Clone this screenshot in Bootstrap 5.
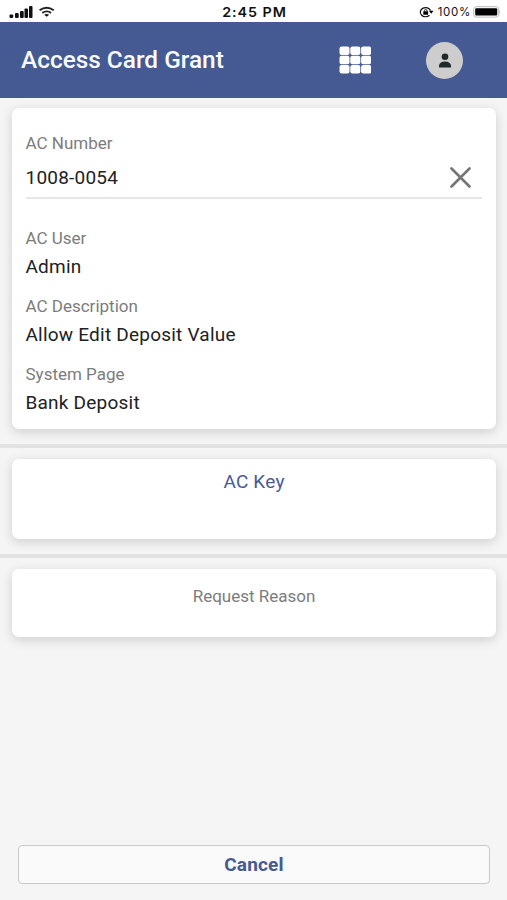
<!DOCTYPE html>
<html lang="en">
<head>
<meta charset="utf-8">
<meta name="viewport" content="width=device-width, initial-scale=1">
<title>Access Card Grant</title>
<link href="https://cdn.jsdelivr.net/npm/bootstrap@5.3.0/dist/css/bootstrap.min.css" rel="stylesheet">
<style>
body{font-family:Roboto,sans-serif;background:#f5f5f5;color:#212121;height:900px;overflow:hidden}
.status{height:22px;background:#fff;font-family:Inter,sans-serif;color:#111;padding:2px 6px 0 9px;display:grid;grid-template-columns:1fr auto 1fr}
.clock{font-size:13.5px;font-weight:600;line-height:20px;letter-spacing:.9px;transform:scaleX(1.06)}
.batt{font-size:11.5px;line-height:20px;letter-spacing:.7px;margin:0 2px 0 4px}
.topbar{height:76px;background:#455a92;padding:0 44px 0 21px}
.title{font-size:24.4px;font-weight:500;color:#f8faff;line-height:30px}
.apps{margin-right:55px}
.avatar{width:37px;height:37px;background:#cdcdcd}
.panel{border:0;border-radius:7px;margin:0 11px 0 12px;box-shadow:0 3px 12px rgba(0,0,0,.16)}
.details{height:321px;margin-top:10px;padding:23px 14px 0 13.5px}
.lbl{font-size:17px;line-height:24px;color:#7c7c7c}
.val{font-size:19px;letter-spacing:.22px;line-height:26px}
.lbl+.val{margin-top:4px}
.val+.lbl{margin-top:14px}
.entry{height:44px;border-bottom:2px solid #e6e6e6;padding:3px 11px 0 0;margin-bottom:27px}
.band{height:4px;background:#e2e2e2;margin:15px 0 11px}
.keycard{height:80px;padding-top:10px}
.keytext{font-size:19px;letter-spacing:.2px;line-height:26px;color:#4a5a98}
.reasoncard{height:68px;padding-top:15px}
.cancel{height:39px;margin:auto 17px 16px 18px;background:#fafafa;border:1.5px solid #c9c9c9;border-radius:4px;color:#455a92;font-size:19px;letter-spacing:.2px;font-weight:700;padding:0;line-height:35px}
</style>
</head>
<body class="d-flex flex-column">
<div class="status flex-shrink-0 align-items-center">
  <div class="d-flex align-items-center">
    <svg width="50" height="14" viewBox="0 0 50 14" fill="#111"><rect x=".5" y="9.500" width="3.700" height="3.500" rx="1"/><rect x="6" y="8" width="3.700" height="5" rx="1"/><rect x="11" y="6" width="3.700" height="7" rx="1"/><rect x="15.500" y="3.500" width="3.500" height="9.500" rx="1"/><rect x="20" y="1" width="3.500" height="12" rx="1"/><g fill="none" stroke="#222" stroke-width="1.900"><path d="M30.600 5.300Q37.700.1 44.800 5.300"/><path d="M33.300 7.900Q37.700 4.900 42.100 7.900"/></g><path d="M35.200 9.700Q37.700 8.300 40.200 9.700L37.700 11.700Z"/></svg>
  </div>
  <div class="clock">2:45 PM</div>
  <div class="d-flex align-items-center justify-content-end">
    <svg class="flex-shrink-0" width="15" height="12" viewBox="0 0 15 12"><path d="M11.600 4.600A5.300 4.600 0 1 0 10.500 9.300" fill="none" stroke="#111" stroke-width="1.200"/><path d="M9.900 4.800H14.500L12.200 7.700Z"/><rect x="4.300" y="5.300" width="4.800" height="3.500" rx=".5"/><path d="M5.300 5.500V4.300Q6.700 2.500 8.100 4.300V5.500" fill="none" stroke="#111"/></svg>
    <span class="batt">100%</span>
    <svg class="flex-shrink-0" width="28" height="12" viewBox="0 0 28 12"><rect x=".7" y=".7" width="25" height="10.400" rx="2.500" fill="#fff" stroke="#bbb"/><rect x="2.200" y="2.200" width="22" height="7.400" rx="1"/><path d="M26.500 4v4q1.500-2 0-4" fill="#999"/></svg>
  </div>
</div>
<nav class="topbar d-flex align-items-center flex-shrink-0">
  <div class="title me-auto">Access Card Grant</div>
  <svg class="apps" width="32" height="28" viewBox="-.5 -.5 32 28" fill="#fff"><rect width="10" height="8.500" rx="2"/><rect x="10.800" width="10" height="8.500" rx="2"/><rect x="21.600" width="10" height="8.500" rx="2"/><rect y="9.300" width="10" height="8.500" rx="2"/><rect x="10.800" y="9.300" width="10" height="8.500" rx="2"/><rect x="21.600" y="9.300" width="10" height="8.500" rx="2"/><rect y="18.600" width="10" height="8.500" rx="2"/><rect x="10.800" y="18.600" width="10" height="8.500" rx="2"/><rect x="21.600" y="18.600" width="10" height="8.500" rx="2"/></svg>
  <div class="avatar rounded-circle d-flex align-items-center justify-content-center"><svg width="12" height="15" viewBox="0 0 12 15" fill="#20292a"><circle cx="6" cy="3.800" r="3.300"/><path d="M0 14.500V12.300Q1 8.500 6 8.500T12 12.300V14.500Z"/></svg></div>
</nav>
<main class="d-flex flex-column flex-grow-1">
  <section class="card panel details">
    <div class="lbl">AC Number</div>
    <div class="entry d-flex align-items-center justify-content-between"><span class="val">1008-0054</span><svg width="21" height="21" viewBox="0 0 21 21"><path d="M1.500 1.500 19.500 19.500M19.500 1.500 1.500 19.500" stroke="#757575" stroke-width="2.600" stroke-linecap="round"/></svg></div>
    <div class="lbl">AC User</div>
    <div class="val">Admin</div>
    <div class="lbl">AC Description</div>
    <div class="val">Allow Edit Deposit Value</div>
    <div class="lbl">System Page</div>
    <div class="val">Bank Deposit</div>
  </section>
  <div class="band"></div>
  <section class="card panel keycard text-center"><div class="keytext">AC Key</div></section>
  <div class="band"></div>
  <section class="card panel reasoncard text-center"><div class="lbl">Request Reason</div></section>
  <button type="button" class="btn cancel">Cancel</button>
</main>
</body>
</html>
